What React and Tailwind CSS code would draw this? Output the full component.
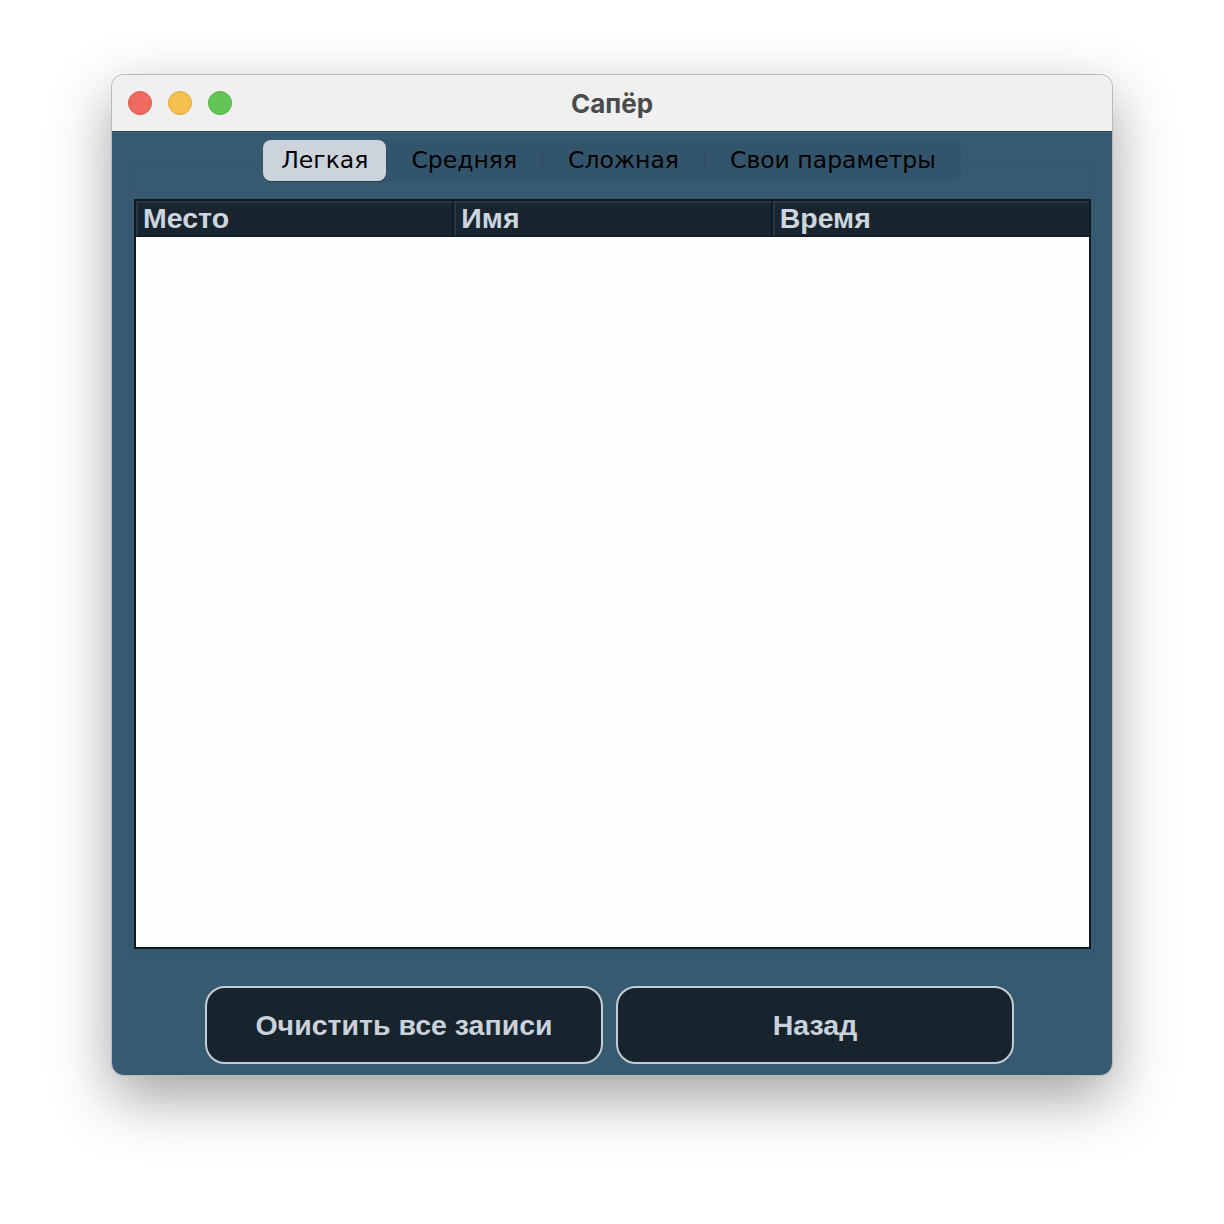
import React from "react";

const tabs = ["Легкая", "Средняя", "Сложная", "Свои параметры"];
const columns = ["Место", "Имя", "Время"];

function TrafficLights() {
  return (
    <div className="flex items-center gap-[16px] pl-[16px]">
      <span className="w-[24px] h-[24px] rounded-full bg-[#ee6a5f] border border-[#d9574c]" />
      <span className="w-[24px] h-[24px] rounded-full bg-[#f5c04f] border border-[#dea93b]" />
      <span className="w-[24px] h-[24px] rounded-full bg-[#62c655] border border-[#4fb043]" />
    </div>
  );
}

export default function App() {
  const active = 0;

  return (
    <div className="min-h-[1224px] bg-white flex justify-center pt-[75px]">
      <div className="w-[1000px] h-[1000px] rounded-[12px] overflow-hidden flex flex-col shadow-[0_22px_60px_rgba(0,0,0,0.38)] ring-1 ring-[#b9b9b9]">
        {/* title bar */}
        <div className="relative h-[57px] shrink-0 bg-[#f0f0f0] flex items-center border-b border-[#2c4558]">
          <TrafficLights />
          <div
            className="absolute inset-0 flex items-center justify-center text-[26px] font-bold text-[#4b4b4b]"
            style={{ fontFamily: "Inter, 'Liberation Sans', sans-serif" }}
          >
            Сапёр
          </div>
        </div>

        {/* content */}
        <div className="flex-1 bg-[#375a70] flex flex-col px-[17px] pt-[8px]">
          <div className="relative z-10 flex justify-center">
            <div
              className="flex items-center h-[41px] rounded-[8px] bg-[#33556b]"
              style={{ fontFamily: "'DejaVu Sans', 'Liberation Sans', sans-serif" }}
            >
              {tabs.map((t, i) => (
                <React.Fragment key={t}>
                  {i > 1 && <span className="w-px h-[22px] bg-[#2e4b5f]" />}
                  <div
                    className={
                      i === active
                        ? "h-[41px] flex items-center px-[18px] rounded-[8px] bg-[#cdd3da] text-[23.5px] text-black shadow-[0_1px_1px_rgba(0,0,0,0.3)]"
                        : "h-[41px] flex items-center px-[25px] text-[23.5px] text-black"
                    }
                  >
                    {t}
                  </div>
                </React.Fragment>
              ))}
            </div>
          </div>

          {/* tab pane */}
          <div className="-mt-[17px] rounded-[9px] border border-[#33546a] bg-[#375a70] pt-[34px] pl-[4px] pr-[3px] pb-[6px]">
            <div className="h-[750px] flex flex-col bg-white border-2 border-[#0f1a22]">
              <div
                className="flex h-[36px] shrink-0 bg-[#0f1a22] gap-[2px]"
                style={{ fontFamily: "'Liberation Sans', Arial, sans-serif" }}
              >
                {columns.map((c) => (
                  <div
                    key={c}
                    className="flex-1 flex items-center pl-[5px] pb-[2px] bg-[#19252e] border-t-2 border-l-2 border-[#263846] border-b-2 border-b-[#121c24] text-[28.5px] font-bold text-[#cdd5de] leading-none"
                  >
                    {c}
                  </div>
                ))}
              </div>
              <div className="flex-1 bg-[#fdfdfd]" />
            </div>
          </div>

          {/* buttons */}
          <div
            className="flex justify-center gap-[13px] mt-[30px] pr-[5px]"
            style={{ fontFamily: "'Liberation Sans', Arial, sans-serif" }}
          >
            <button className="w-[398px] h-[78px] rounded-[20px] bg-[#17232d] border-2 border-[#c3ccd4] text-[28.5px] font-bold text-[#c9d2db]">
              Очистить все записи
            </button>
            <button className="w-[398px] h-[78px] rounded-[20px] bg-[#17232d] border-2 border-[#c3ccd4] text-[28.5px] font-bold text-[#c9d2db]">
              Назад
            </button>
          </div>
        </div>
      </div>
    </div>
  );
}
